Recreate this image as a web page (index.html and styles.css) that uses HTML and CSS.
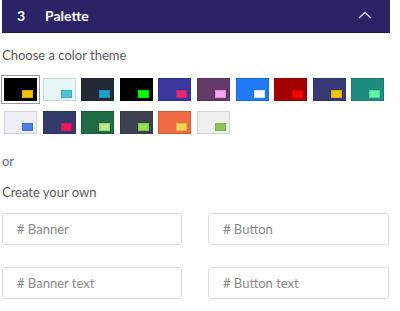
FILE: index.html
```html
<!DOCTYPE html>
<html lang="en">
<head>
  <meta charset="UTF-8" />
  <meta name="viewport" content="width=device-width, initial-scale=1" />
  <title>Palette</title>
  <link rel="stylesheet" href="styles.css">
</head>
<body>

<div class="step-header">
  <span class="step-num">3</span>
  <span class="step-title">Palette</span>
  <svg class="chevron" width="14" height="8" viewBox="0 0 14 8">
    <polyline points="1,7 7,1.5 13,7" fill="none" stroke="#d8d6ea" stroke-width="1.3" />
  </svg>
</div>

<div class="step-body">
  <p class="label">Choose a color theme</p>

  <div class="themes">
    <div class="theme selected" style="background:#000000"><span style="background:#f2c400"></span></div>
    <div class="theme" style="background:#e6f6f6"><span style="background:#4dc4d6"></span></div>
    <div class="theme" style="background:#232a37"><span style="background:#17a2d0"></span></div>
    <div class="theme" style="background:#000000"><span style="background:#00ff00"></span></div>
    <div class="theme" style="background:#3a389e"><span style="background:#e2287c"></span></div>
    <div class="theme" style="background:#633a6a"><span style="background:#f6a4f4"></span></div>
    <div class="theme" style="background:#1f7cf6"><span style="background:#ffffff"></span></div>
    <div class="theme" style="background:#a30000"><span style="background:#ff0000"></span></div>
    <div class="theme" style="background:#383a78"><span style="background:#f2c600"></span></div>
    <div class="theme" style="background:#1e8a80"><span style="background:#5ef6a6"></span></div>
    <div class="theme" style="background:#eef0f6"><span style="background:#4a7ee9"></span></div>
    <div class="theme" style="background:#343a6a"><span style="background:#f0165a"></span></div>
    <div class="theme" style="background:#1e6b44"><span style="background:#b8e986"></span></div>
    <div class="theme" style="background:#3c4250"><span style="background:#8ee64a"></span></div>
    <div class="theme" style="background:#f06a44"><span style="background:#f7d44f"></span></div>
    <div class="theme" style="background:#efefef"><span style="background:#8bc85c"></span></div>
  </div>

  <p class="or">or</p>

  <p class="label own">Create your own</p>

  <div class="custom-grid">
    <input type="text" placeholder="# Banner" />
    <input type="text" placeholder="# Button" />
    <input type="text" placeholder="# Banner text" />
    <input type="text" placeholder="# Button text" />
  </div>
</div>

</body>
</html>
```

FILE: styles.css
```css
body {
  font-family: Lato, "Noto Sans", sans-serif;
  background: #fff;
  margin: 0; padding: 0;
  color: #555;
}
.step-header {
  margin-left: 2px;
  width: 388px;
  height: 33px;
  box-sizing: border-box;
  background: #2a2466;
  border-bottom: 1px solid #1d1850;
  display: flex;
  align-items: center;
  padding: 0 17px 1px 15px;
  color: #fff;
  font-weight: bold;
  font-size: 14px;
}
.step-num {
  width: 28px;
}
.step-title {
  flex: 1;
}
.chevron {
  margin-right: 1px;
  margin-top: -2px;
}
.step-body {
  padding-left: 2px;
  width: 388px;
}
.label {
  margin: 14px 0 0 0;
  font-size: 13px;
  line-height: 16px;
  color: #5a5a5a;
}
.themes {
  margin: 15px 0 0 2px;
  display: flex;
  flex-wrap: wrap;
  gap: 10px 5.6px;
  width: 385px;
}
.theme {
  width: 33px;
  height: 23px;
  box-sizing: border-box;
  border: 1px solid rgba(0,0,0,0.12);
  display: flex;
  align-items: flex-end;
  justify-content: flex-end;
  padding: 0 3px 2px 0;
  cursor: pointer;
}
.theme span {
  width: 11px;
  height: 8px;
  box-sizing: border-box;
  border: 1px solid rgba(0,0,0,0.12);
}
.theme.selected {
  outline: 1px solid #999;
  outline-offset: 2px;
}
.or {
  margin: 19px 0 0 0;
  font-size: 13px;
  line-height: 16px;
  color: #6563a8;
}
.own {
  margin-top: 15px;
}
.custom-grid {
  margin-top: 13px;
  display: grid;
  grid-template-columns: 180px 181px;
  column-gap: 26px;
  row-gap: 22px;
}
.custom-grid input {
  height: 32px;
  box-sizing: border-box;
  border: 1px solid #ddd;
  border-radius: 3px;
  padding: 0 14px;
  font-family: Lato, "Noto Sans", sans-serif;
  font-size: 13px;
  color: #555;
}
.custom-grid input::placeholder {
  color: #8a8a8a;
}
```
